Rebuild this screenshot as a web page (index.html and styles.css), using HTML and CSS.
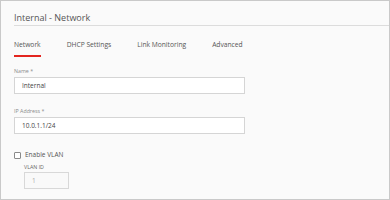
FILE: index.html
```html
<!DOCTYPE html>
<html>
<head>
<meta charset="utf-8">
<link rel="stylesheet" href="styles.css">
</head>
<body>
<div class="panel">
  <div class="header"><span class="title">Internal - Network</span></div>
  <div class="tabs">
    <span class="tab active">Network</span>
    <span class="tab">DHCP Settings</span>
    <span class="tab">Link Monitoring</span>
    <span class="tab">Advanced</span>
  </div>
  <div class="form">
    <div class="field">
      <div class="label">Name *</div>
      <div class="input">Internal</div>
    </div>
    <div class="field field-gap">
      <div class="label">IP Address *</div>
      <div class="input">10.0.1.1/24</div>
    </div>
    <div class="check-row">
      <span class="checkbox"></span>
      <span class="check-label">Enable VLAN</span>
    </div>
    <div class="vlan">
      <div class="label">VLAN ID</div>
      <div class="input input-small disabled">1</div>
    </div>
  </div>
</div>
</body>
</html>
```

FILE: styles.css
```css
html, body {
  margin: 0;
  padding: 0;
  background: #fafafa;
}
body {
  font-family: "Open Sans", "Liberation Sans", sans-serif;
}
.panel {
  width: 390px;
  height: 200px;
  box-sizing: border-box;
  border: 1px solid #c9c9c9;
  background: #fafafa;
  padding-left: 13px;
  overflow: hidden;
}
.header {
  padding-top: 11px;
  padding-bottom: 1px;
  border-bottom: 1px solid #dcdcdc;
}
.title {
  display: block;
  font-size: 9px;
  line-height: 12px;
  color: #555;
}
.tabs {
  display: flex;
  margin-top: 14px;
}
.tab {
  font-size: 6.7px;
  line-height: 10px;
  color: #555;
  padding-bottom: 5px;
  margin-right: 26px;
  border-bottom: 2px solid transparent;
}
.tab.active {
  border-bottom-color: #e3251f;
}
.form {
  margin-top: 11px;
}
.label {
  font-size: 5.3px;
  line-height: 7px;
  color: #8a8a8a;
  margin-bottom: 2px;
}
.input {
  width: 231px;
  height: 17px;
  box-sizing: border-box;
  border: 1px solid #d5d5d5;
  background: #fff;
  padding-left: 7px;
  font-size: 6.5px;
  line-height: 15px;
  color: #444;
}
.field-gap {
  margin-top: 14px;
}
.check-row {
  display: flex;
  align-items: center;
  margin-top: 16px;
  height: 10px;
}
.checkbox {
  width: 5px;
  height: 5px;
  border: 1px solid #8a8a8a;
  border-radius: 1px;
  background: #fff;
  margin-right: 4px;
}
.check-label {
  font-size: 6.5px;
  line-height: 10px;
  color: #555;
}
.vlan {
  margin-left: 10px;
  margin-top: 4px;
}
.vlan .label {
  margin-bottom: 1px;
  color: #666;
}
.input-small {
  width: 45px;
}
.disabled {
  background: #f9f9f9;
  border-color: #d8d8d8;
  color: #aaa;
}
```
